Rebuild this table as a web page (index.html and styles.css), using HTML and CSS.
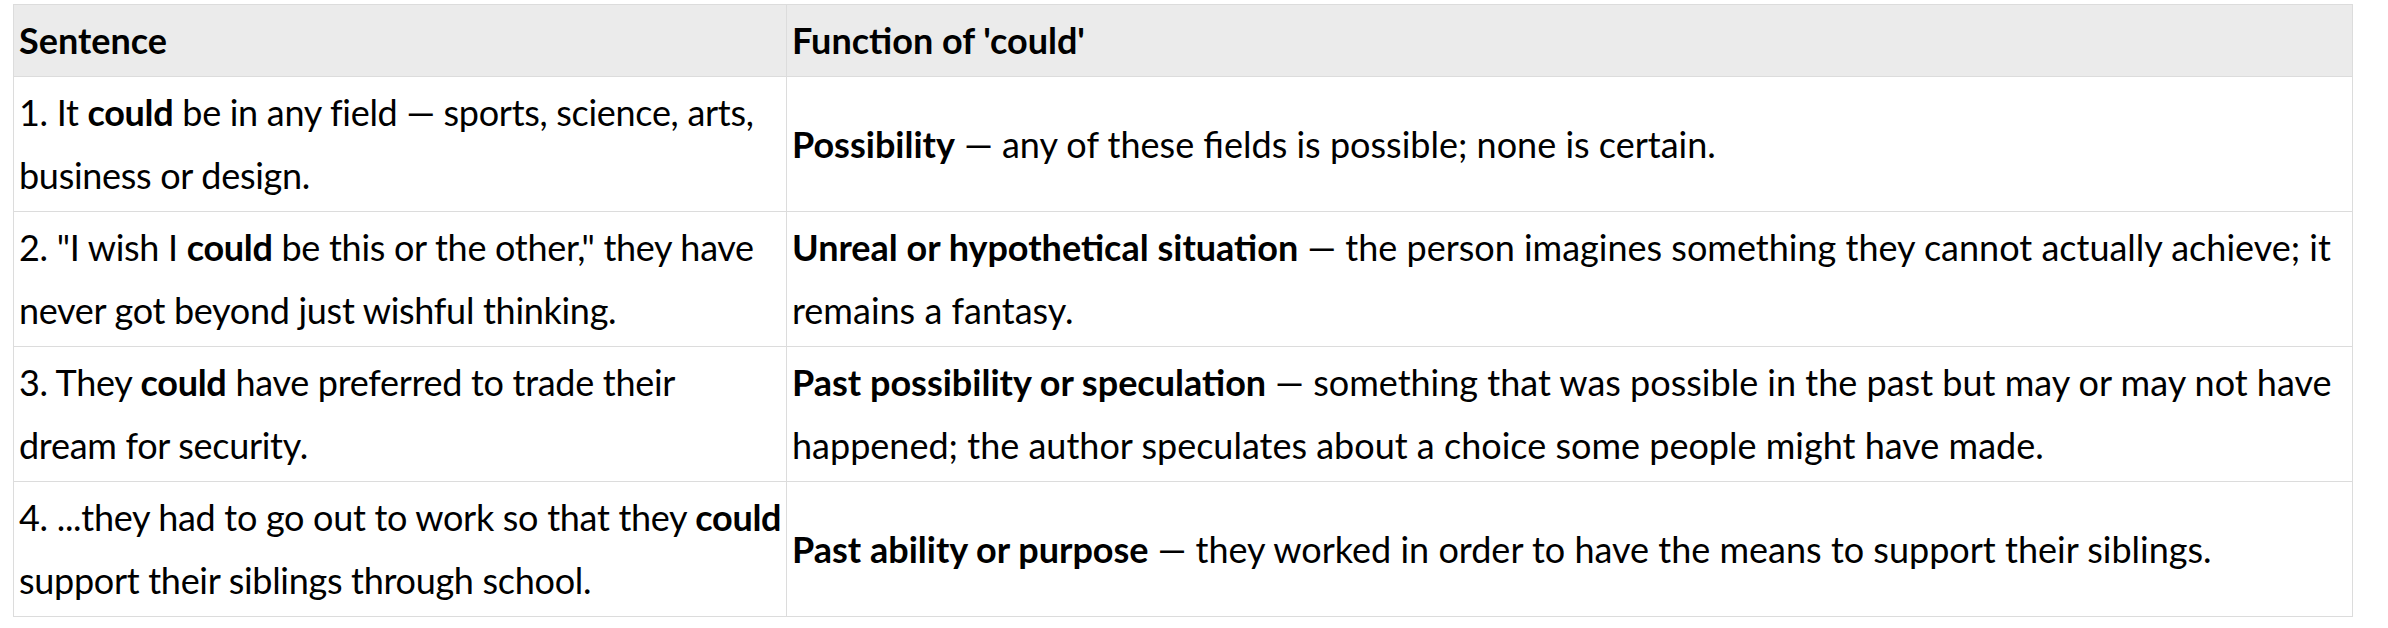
FILE: index.html
```html
<!DOCTYPE html>
<html lang="en">
<head>
<meta charset="utf-8">
<title>Function of could</title>
<link rel="stylesheet" href="styles.css">
</head>
<body>
<div class="wrap">
<table class="grid">
  <colgroup>
    <col class="c1">
    <col class="c2">
  </colgroup>
  <thead>
    <tr><th>Sentence</th><th>Function of 'could'</th></tr>
  </thead>
  <tbody>
    <tr>
      <td class="src">1. It <b>could</b> be in any field — sports, science, arts, business or design.</td>
      <td><b>Possibility</b> — any of these fields is possible; none is certain.</td>
    </tr>
    <tr>
      <td class="src">2. "I wish I <b>could</b> be this or the other," they have never got beyond just wishful thinking.</td>
      <td><b>Unreal or hypothetical situation</b> — the person imagines something they cannot actually achieve; it remains a fantasy.</td>
    </tr>
    <tr>
      <td class="src">3. They <b>could</b> have preferred to trade their<br>dream for security.</td>
      <td><b>Past possibility or speculation</b> — something that was possible in the past but may or may not have happened; the author speculates about a choice some people might have made.</td>
    </tr>
    <tr>
      <td class="src">4. ...they had to go out to work so that they <b>could</b> support their siblings through school.</td>
      <td><b>Past ability or purpose</b> — they worked in order to have the means to support their siblings.</td>
    </tr>
  </tbody>
</table>
</div>
</body>
</html>
```
FILE: styles.css
```css
html, body {
  margin: 0;
  padding: 0;
  background: #ffffff;
}
.wrap {
  padding: 4px 0 0 13px;
}
.grid {
  width: 2340px;
  border-collapse: collapse;
  table-layout: fixed;
  font-family: Lato, "Liberation Sans", sans-serif;
  font-size: 36px;
  line-height: 63px;
  color: #000;
}
.c1 { width: 773px; }
.grid th, .grid td {
  border: 1px solid #dcdcdc;
  padding: 4px 4px 4px 5px;
  text-align: left;
  vertical-align: middle;
}
.grid th {
  background: #ebebeb;
  font-weight: 700;
}
.grid .src {
  letter-spacing: -0.3px;
}
.grid b {
  font-weight: 700;
}
```
